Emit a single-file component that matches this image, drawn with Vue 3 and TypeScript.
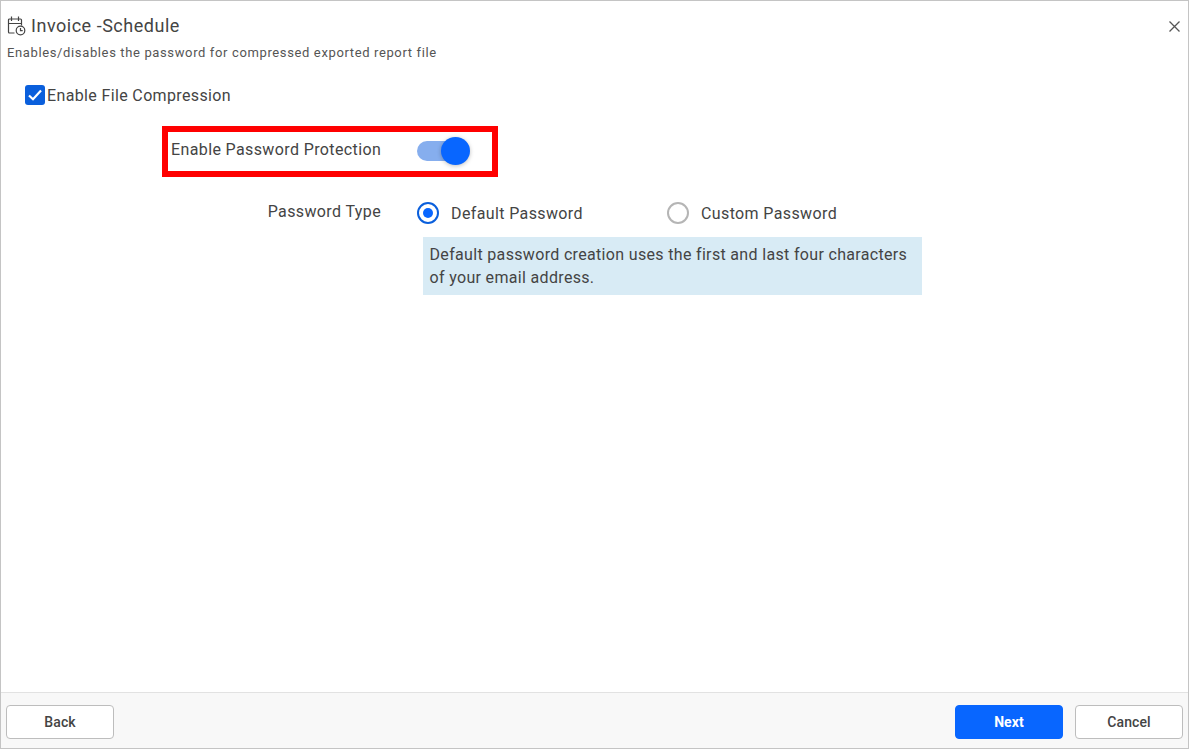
<script setup lang="ts">
const title = 'Invoice -Schedule'
const subtitle = 'Enables/disables the password for compressed exported report file'
</script>

<template>
  <div class="dialog">
    <header class="head">
      <div class="title-row">
        <svg class="cal" width="20" height="20" viewBox="0 0 20 20" fill="none" stroke="#444" stroke-width="1.2">
          <path d="M7.5 17H2.5a1 1 0 0 1-1-1V4a1 1 0 0 1 1-1h11a1 1 0 0 1 1 1v5.5" />
          <path d="M1.5 7.5h13M4.5 0.5v4.5M11.5 0.5v4.5" />
          <circle cx="13.5" cy="14.5" r="4.3" />
          <path d="M13.5 12v2.7h2.2" />
        </svg>
        <h1 class="title">{{ title }}</h1>
        <svg class="close" width="11" height="11" viewBox="0 0 11 11" stroke="#555" stroke-width="1.3" fill="none">
          <path d="M0.5 0.5l10 10M10.5 0.5L0.5 10.5" />
        </svg>
      </div>
      <p class="subtitle">{{ subtitle }}</p>
    </header>

    <main class="body">
      <label class="check-row">
        <span class="checkbox">
          <svg width="20" height="20" viewBox="0 0 20 20" fill="none" stroke="#fff" stroke-width="2.2">
            <path d="M4 10.5l4 3.8 8-8.8" />
          </svg>
        </span>
        <span>Enable File Compression</span>
      </label>

      <div class="highlight">
        <span class="field-label">Enable Password Protection</span>
        <span class="toggle"><span class="knob"></span></span>
      </div>

      <div class="type-row">
        <span class="field-label">Password Type</span>
        <span class="radio on"></span>
        <span class="radio-text first">Default Password</span>
        <span class="radio"></span>
        <span class="radio-text">Custom Password</span>
      </div>

      <div class="info">Default password creation uses the first and last four characters of your email address.</div>
    </main>

    <footer class="foot">
      <button class="btn">Back</button>
      <span class="spacer"></span>
      <button class="btn primary">Next</button>
      <button class="btn">Cancel</button>
    </footer>
  </div>
</template>

<style>
html, body { margin: 0; background: #fff; }
</style>

<style scoped>
.dialog {
  box-sizing: border-box;
  width: 1189px;
  height: 749px;
  border: 1px solid #c4c4c4;
  display: flex;
  flex-direction: column;
  background: #fff;
  font-family: Roboto, "Liberation Sans", sans-serif;
  color: #444;
}
.head { padding: 14px 8px 0 6px; }
.title-row { display: flex; align-items: center; height: 22px; }
.cal { margin-right: 4px; flex: none; }
.title { margin: 0; font-size: 18px; font-weight: 400; line-height: 22px; letter-spacing: 0.52px; color: #444; flex: 1; }
.subtitle { margin: 8px 0 0; font-size: 13px; line-height: 16px; letter-spacing: 0.63px; color: #555; }
.body { flex: 1; padding: 0 0 0 24px; }
.check-row { display: flex; align-items: center; margin-top: 24px; height: 20px; font-size: 16px; letter-spacing: 0.36px; gap: 2px; }
.check-row span:last-child { margin-top: 0; }
.checkbox { width: 20px; height: 20px; border-radius: 3px; background: #0a5fdc; display: block; }
.checkbox svg { display: block; }
.highlight {
  box-sizing: border-box;
  width: 336px;
  height: 51px;
  margin: 21px 0 0 137px;
  border: 6px solid #f00;
  display: flex;
  align-items: center;
}
.field-label { font-size: 16px; letter-spacing: 0.38px; color: #444; white-space: nowrap; }
.highlight .field-label { margin: -5px 0 0 3px; width: 210px; }
.toggle {
  margin: -1px 0 0 36px;
  width: 50px;
  height: 20px;
  border-radius: 10px;
  background: #86aeee;
  position: relative;
}
.knob {
  position: absolute;
  right: -3px;
  top: -4px;
  width: 29px;
  height: 28px;
  border-radius: 50%;
  background: #0866ff;
  box-shadow: 0 1px 4px rgba(0, 0, 0, 0.25);
}
.type-row { display: flex; align-items: center; height: 22px; margin-top: 25px; }
.type-row .field-label { width: 356px; text-align: right; margin-top: -3px; }
.radio {
  box-sizing: border-box;
  width: 22px;
  height: 22px;
  border-radius: 50%;
  border: 2px solid #b5b5b5;
  background: #fff;
  flex: none;
}
.type-row .field-label + .radio { margin-left: 36px; }
.radio.on { border-color: #0a5fdc; position: relative; }
.radio.on::after {
  content: "";
  position: absolute;
  left: 4px;
  top: 4px;
  width: 10px;
  height: 10px;
  border-radius: 50%;
  background: #0866ff;
}
.radio-text { font-size: 16px; letter-spacing: 0.38px; color: #444; margin-left: 12px; }
.radio-text.first { width: 216px; }
.info {
  box-sizing: border-box;
  width: 499px;
  height: 58px;
  margin: 13px 0 0 398px;
  padding: 6px 7px 6px 6.5px;
  background: #d8ebf5;
  font-size: 16px;
  line-height: 23px;
  letter-spacing: 0.33px;
  color: #444;
}
.foot {
  box-sizing: border-box;
  height: 56px;
  border-top: 1px solid #e2e2e2;
  background: #f8f8f8;
  display: flex;
  align-items: center;
  padding: 2px 5px 0 5px;
  gap: 12px;
}
.spacer { flex: 1; }
.btn {
  box-sizing: border-box;
  width: 108px;
  height: 34px;
  border: 1px solid #bdbdbd;
  border-radius: 4px;
  background: #fff;
  color: #444;
  font-family: inherit;
  font-size: 14px;
  font-weight: 500;
  letter-spacing: 0.1px;
  padding: 0;
}
.btn.primary { background: #0866ff; border-color: #0866ff; color: #fff; font-weight: 700; }
</style>
